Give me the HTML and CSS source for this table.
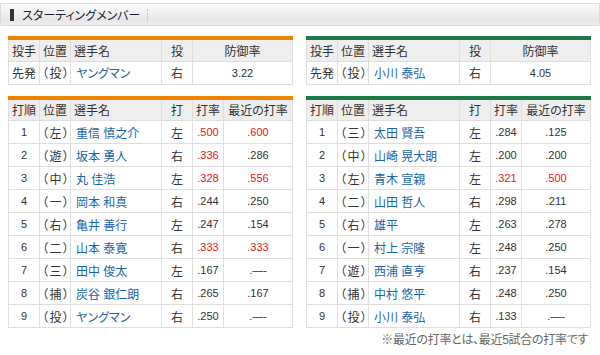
FILE: index.html
```html
<!DOCTYPE html>
<html lang="ja">
<head>
<meta charset="utf-8">
<link rel="stylesheet" href="styles.css">
</head>
<body>
<div class="titlebar">
  <span class="marker"></span>
  <h1 class="title">スターティングメンバー</h1>
  <span class="sep"></span>
</div>
<div class="teams">
  <div class="team orange">
    <table class="tbl">
      <colgroup><col class="c1"><col class="c2"><col class="c3"><col class="c4"><col class="c5"><col class="c6"></colgroup>
      <tr class="head"><th class="l">投手</th><th class="l">位置</th><th class="l">選手名</th><th>投</th><th colspan="2">防御率</th></tr>
      <tr><td class="l">先発</td><td class="l pos">（投）</td><td class="l name">ヤングマン</td><td>右</td><td colspan="2" class="num">3.22</td></tr>
    </table>
    <table class="tbl">
      <colgroup><col class="c1"><col class="c2"><col class="c3"><col class="c4"><col class="c5"><col class="c6"></colgroup>
      <tr class="head"><th class="l">打順</th><th class="l">位置</th><th class="l">選手名</th><th>打</th><th>打率</th><th>最近の打率</th></tr>
      <tr><td class="num">1</td><td class="l pos">（左）</td><td class="l name">重信 慎之介</td><td>左</td><td class="num red">.500</td><td class="num red">.600</td></tr>
      <tr><td class="num">2</td><td class="l pos">（遊）</td><td class="l name">坂本 勇人</td><td>右</td><td class="num red">.336</td><td class="num">.286</td></tr>
      <tr><td class="num">3</td><td class="l pos">（中）</td><td class="l name">丸 佳浩</td><td>左</td><td class="num red">.328</td><td class="num red">.556</td></tr>
      <tr><td class="num">4</td><td class="l pos">（一）</td><td class="l name">岡本 和真</td><td>右</td><td class="num">.244</td><td class="num">.250</td></tr>
      <tr><td class="num">5</td><td class="l pos">（右）</td><td class="l name">亀井 善行</td><td>左</td><td class="num">.247</td><td class="num">.154</td></tr>
      <tr><td class="num">6</td><td class="l pos">（二）</td><td class="l name">山本 泰寛</td><td>右</td><td class="num red">.333</td><td class="num red">.333</td></tr>
      <tr><td class="num">7</td><td class="l pos">（三）</td><td class="l name">田中 俊太</td><td>左</td><td class="num">.167</td><td class="num">.—-</td></tr>
      <tr><td class="num">8</td><td class="l pos">（捕）</td><td class="l name">炭谷 銀仁朗</td><td>右</td><td class="num">.265</td><td class="num">.167</td></tr>
      <tr><td class="num">9</td><td class="l pos">（投）</td><td class="l name">ヤングマン</td><td>右</td><td class="num">.250</td><td class="num">.—-</td></tr>
    </table>
  </div>
  <div class="team green">
    <table class="tbl">
      <colgroup><col class="c1"><col class="c2"><col class="c3"><col class="c4"><col class="c5"><col class="c6"></colgroup>
      <tr class="head"><th class="l">投手</th><th class="l">位置</th><th class="l">選手名</th><th>投</th><th colspan="2">防御率</th></tr>
      <tr><td class="l">先発</td><td class="l pos">（投）</td><td class="l name">小川 泰弘</td><td>右</td><td colspan="2" class="num">4.05</td></tr>
    </table>
    <table class="tbl">
      <colgroup><col class="c1"><col class="c2"><col class="c3"><col class="c4"><col class="c5"><col class="c6"></colgroup>
      <tr class="head"><th class="l">打順</th><th class="l">位置</th><th class="l">選手名</th><th>打</th><th>打率</th><th>最近の打率</th></tr>
      <tr><td class="num">1</td><td class="l pos">（三）</td><td class="l name">太田 賢吾</td><td>左</td><td class="num">.284</td><td class="num">.125</td></tr>
      <tr><td class="num">2</td><td class="l pos">（中）</td><td class="l name">山崎 晃大朗</td><td>左</td><td class="num">.200</td><td class="num">.200</td></tr>
      <tr><td class="num">3</td><td class="l pos">（左）</td><td class="l name">青木 宣親</td><td>左</td><td class="num red">.321</td><td class="num red">.500</td></tr>
      <tr><td class="num">4</td><td class="l pos">（二）</td><td class="l name">山田 哲人</td><td>右</td><td class="num">.298</td><td class="num">.211</td></tr>
      <tr><td class="num">5</td><td class="l pos">（右）</td><td class="l name">雄平</td><td>左</td><td class="num">.263</td><td class="num">.278</td></tr>
      <tr><td class="num">6</td><td class="l pos">（一）</td><td class="l name">村上 宗隆</td><td>左</td><td class="num">.248</td><td class="num">.250</td></tr>
      <tr><td class="num">7</td><td class="l pos">（遊）</td><td class="l name">西浦 直亨</td><td>右</td><td class="num">.237</td><td class="num">.154</td></tr>
      <tr><td class="num">8</td><td class="l pos">（捕）</td><td class="l name">中村 悠平</td><td>右</td><td class="num">.248</td><td class="num">.250</td></tr>
      <tr><td class="num">9</td><td class="l pos">（投）</td><td class="l name">小川 泰弘</td><td>右</td><td class="num">.133</td><td class="num">.—-</td></tr>
    </table>
  </div>
</div>
<p class="note">※最近の打率とは、最近5試合の打率です</p>
</body>
</html>
```

FILE: styles.css
```css
html, body {
  margin: 0;
  padding: 0;
  background: #fff;
}
body {
  width: 600px;
  font-family: "Liberation Sans", "Noto Sans CJK JP", sans-serif;
  font-feature-settings: "palt";
  color: #333;
  font-size: 12px;
}
.titlebar {
  box-sizing: border-box;
  margin-top: 3px;
  height: 23px;
  border: 1px solid #dcdcdc;
  background: linear-gradient(#fbfbfb 0%, #f1f1f1 40%, #e6e6e6 75%, #eeeeee 100%);
  display: flex;
  align-items: center;
  padding-left: 9px;
}
.marker {
  width: 4px;
  height: 12px;
  background: #333;
}
.title {
  margin: 0 0 0 8px;
  font-size: 12px;
  font-weight: normal;
  color: #1d1d3a;
}
.sep {
  margin-left: 7px;
  height: 12px;
  border-left: 1px dotted #bbb;
}
.teams {
  display: grid;
  grid-template-columns: 284px 284px;
  column-gap: 14px;
  padding-left: 8px;
  margin-top: 10px;
}
.tbl {
  width: 284px;
  table-layout: fixed;
  border-collapse: collapse;
  margin-bottom: 11px;
}
.tbl + .tbl { margin-bottom: 4px; }
.orange .tbl { border-top: 4px solid #f08300; }
.green .tbl { border-top: 4px solid #1b7a48; }
.c1 { width: 31px; }
.c2 { width: 31px; }
.c3 { width: 91px; }
.c4 { width: 31px; }
.c5 { width: 31px; }
.c6 { width: 69px; }
.tbl th, .tbl td {
  border: 1px solid #dedede;
  height: 23px;
  padding: 0;
  text-align: center;
  font-weight: normal;
  white-space: nowrap;
  overflow: hidden;
  box-sizing: border-box;
}
.tbl .head th {
  background: #eeeeee;
  color: #333;
}
.tbl .l {
  text-align: left;
  padding-left: 3px;
}
.tbl .pos {
  padding-left: 2px;
  letter-spacing: 1.5px;
}
.tbl .name {
  color: #1a64a8;
  padding-left: 5px;
}
.num { font-size: 11px; }
.red { color: #f01010; }
.note {
  margin: 0;
  width: 588px;
  line-height: 16px;
  text-align: right;
  color: #666;
  font-size: 12px;
  letter-spacing: -0.3px;
}
```
